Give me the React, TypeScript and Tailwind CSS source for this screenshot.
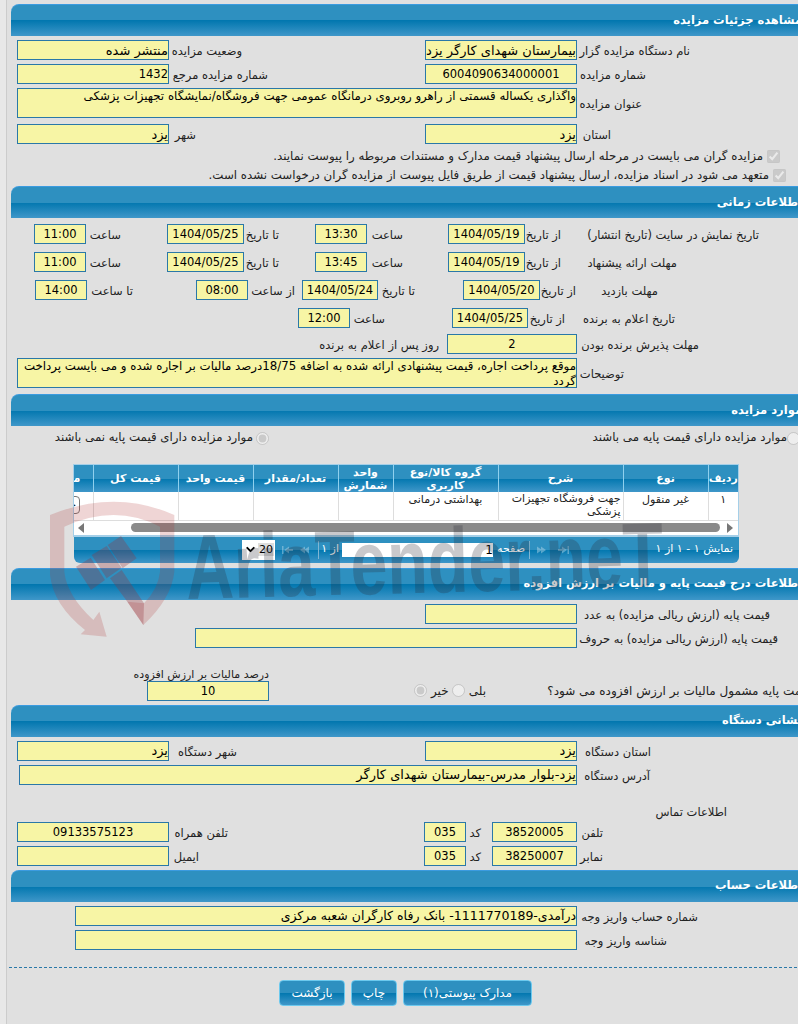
import { ReactNode } from "react"
import { ChevronDown } from "lucide-react"
import clsx from "clsx"

const barBg = "bg-[linear-gradient(to_bottom,#2e90c0_0%,#2e90c0_50%,#0277af_50%,#3f97c9_100%)]"

function Title({ children, className }: { children: ReactNode; className?: string }) {
  return (
    <div
      dir="rtl"
      className={clsx(
        "h-8 shrink-0 rounded-tl-lg border-t border-[#3b9be0] flex items-center text-[11.5px] font-bold text-white whitespace-nowrap",
        barBg,
        className
      )}
    >
      {children}
    </div>
  )
}

function F({
  value = "",
  className,
  center,
  size = "text-[11.5px]",
}: {
  value?: string
  className?: string
  center?: boolean
  size?: string
}) {
  return (
    <input
      readOnly
      dir="rtl"
      value={value}
      className={clsx(
        "h-5 shrink-0 border border-[#2a78a8] bg-[#f7f5a5] text-black outline-none",
        size,
        center ? "text-center" : "text-right",
        className
      )}
    />
  )
}

function Area({ value, className }: { value: string; className?: string }) {
  return (
    <textarea
      readOnly
      dir="rtl"
      value={value}
      className={clsx(
        "h-[30px] shrink-0 resize-none overflow-hidden border border-[#2a78a8] bg-[#f7f5a5] text-[11.8px] leading-[15px] text-black outline-none",
        className
      )}
    />
  )
}

function L({ children, className }: { children: ReactNode; className?: string }) {
  return (
    <span dir="rtl" className={clsx("h-5 shrink-0 whitespace-nowrap text-right text-[11.5px] leading-[22px]", className)}>
      {children}
    </span>
  )
}

function Row({ children, className }: { children: ReactNode; className?: string }) {
  return <div className={clsx("flex items-center", className)}>{children}</div>
}

function Btn({ children, className }: { children: ReactNode; className?: string }) {
  return (
    <button
      className={clsx(
        "h-[26px] rounded border border-[#6cc9ee] text-[12px] text-white",
        barBg,
        className
      )}
    >
      {children}
    </button>
  )
}

function Nav({ right, bar }: { right?: boolean; bar?: boolean }) {
  return (
    <svg width="11" height="8" viewBox="0 0 11 8" className={clsx("shrink-0 opacity-40", right && "rotate-180")}>
      {bar && <rect x="0" y="0" width="1.5" height="8" fill="#cfe6f2" />}
      <polygon points="2,4 7,0.5 7,7.5" fill="#cfe6f2" />
      {!bar && <polygon points="6,4 11,0.5 11,7.5" fill="#cfe6f2" />}
      {bar && <rect x="7" y="3" width="4" height="2" fill="#cfe6f2" />}
    </svg>
  )
}

const heads = [
  { t: "ردیف", w: "w-[30px]" },
  { t: "نوع", w: "w-[85px]" },
  { t: "شرح", w: "w-[125px]" },
  { t: "گروه کالا/نوع کاربری", w: "w-[105px]" },
  { t: "واحد شمارش", w: "w-[55px]" },
  { t: "تعداد/مقدار", w: "w-[85px]" },
  { t: "قیمت واحد", w: "w-[75px]" },
  { t: "قیمت کل", w: "w-[85px]" },
  { t: "مدارک", w: "w-[60px]" },
]

function ItemsTable() {
  return (
    <div className="ml-[62px] mt-[14px] w-[666px] border border-[#a5cfe8] border-b-2 bg-white">
      <div dir="rtl" className="overflow-hidden">
        <table className="w-[705px] table-fixed border-collapse text-[11px]">
          <thead>
            <tr className={barBg}>
              {heads.map((h) => (
                <th
                  key={h.t}
                  className={clsx(h.w, "h-[27px] border-l border-[#8fd0ee] p-0 text-center text-[11px] font-bold leading-[13px] text-white")}
                >
                  {h.t}
                </th>
              ))}
            </tr>
          </thead>
          <tbody>
            <tr className="h-[28px] align-top border-b border-[#ddd] text-[#222]">
              <td className="border-l border-[#ddd] text-center">۱</td>
              <td className="border-l border-[#ddd] text-center">غیر منقول</td>
              <td className="border-l border-[#ddd] pr-0.5 leading-[13px] text-right">جهت فروشگاه تجهیزات پزشکی</td>
              <td className="border-l border-[#ddd] text-center">بهداشتی درمانی</td>
              <td className="border-l border-[#ddd]"></td>
              <td className="border-l border-[#ddd]"></td>
              <td className="border-l border-[#ddd]"></td>
              <td className="border-l border-[#ddd]"></td>
              <td className="border-l border-[#ddd] pt-[4px]">
                <button className="mr-[13px] block h-[18px] w-[40px] rounded border border-[#777] bg-white text-[11px]">جزئیات</button>
              </td>
            </tr>
          </tbody>
        </table>
      </div>
      <div className="flex h-[14px] items-center">
        <svg width="6" height="10" viewBox="0 0 6 10" className="ml-[4px] shrink-0">
          <polygon points="0,5 6,0 6,10" fill="#777" />
        </svg>
        <div className="ml-[47px] h-[9px] w-[589px] rounded-full bg-[#8a8a8a]"></div>
        <svg width="6" height="10" viewBox="0 0 6 10" className="ml-[7px] shrink-0">
          <polygon points="6,5 0,0 0,10" fill="#777" />
        </svg>
      </div>
    </div>
  )
}

function Pager() {
  return (
    <div className={clsx("ml-[63px] flex h-[26px] w-[665px] items-center rounded-b-md text-[11px] text-white", barBg)}>
      <div className="ml-[168px] flex h-[20px] w-[33px] shrink-0 items-center bg-white text-black">
        <ChevronDown size={13} strokeWidth={3.5} className="ml-[2px] shrink-0" />
        <span className="ml-[1px] bg-[#ddd] px-[1px] text-[11px] leading-[13px]">20</span>
      </div>
      <div className="ml-[7px]"><Nav bar /></div>
      <div className="ml-[5px]"><Nav /></div>
      <div className="ml-[9px] h-[18px] w-px bg-[#7fb6d4]"></div>
      <span dir="rtl" className="ml-[3px] w-[17px] whitespace-nowrap">از ۱</span>
      <input readOnly value="1" dir="rtl" className="ml-[3px] h-[14px] w-[151px] bg-white text-right text-[12px] text-black" />
      <span dir="rtl" className="ml-[4px] w-[28px] whitespace-nowrap">صفحه</span>
      <div className="ml-[4px] h-[18px] w-px bg-[#7fb6d4]"></div>
      <div className="ml-[7px]"><Nav right /></div>
      <div className="ml-[10px]"><Nav right bar /></div>
      <span dir="rtl" className="ml-auto mr-[6px] whitespace-nowrap">نمایش ۱ - ۱ از ۱</span>
    </div>
  )
}

// watermark that lies over the whole page
function Watermark() {
  return (
    <div className="pointer-events-none absolute inset-0 overflow-hidden">
      <svg width="150" height="150" viewBox="0 0 450 450" className="absolute left-[40px] top-[495px]">
        <path
          fill="rgba(175,45,45,0.2)"
          fillRule="evenodd"
          d="M30 60 Q225 -20 403 60 L403 230 Q395 310 310 390 L262 320 L312 325 Q355 280 360 230 L360 95 Q225 25 73 95 L73 230 Q80 300 160 375 L178 350 L200 425 L122 418 L135 405 Q40 330 30 240 Z"
        />
        <path
          fill="rgba(150,50,60,0.3)"
          d="M108 215 L152 188 L195 255 L153 285 Z M155 180 L200 153 L245 218 L200 250 Z M203 150 L243 123 L290 190 L248 220 Z M210 250 L245 225 L312 325 L310 390 L262 320 Z"
        />
      </svg>
      <div className="absolute left-[186px] top-[512px] origin-left -rotate-[1.5deg] scale-x-[0.72] whitespace-nowrap [font-family:'Liberation_Sans',sans-serif] text-[92px] font-bold leading-[110px] text-[rgba(40,40,50,0.25)]">
        AriaTender.neT
      </div>
    </div>
  )
}

export default function App() {
  return (
    <div className="relative flex h-[1024px] w-[798px] overflow-hidden bg-[#e0e0e0] [font-family:'DejaVu_Sans',sans-serif] text-[12px] text-[#222]">
      <div className="w-[7px] shrink-0 border-r border-[#ccc] bg-[#e8e8e8]"></div>
      <div className="ml-[4px] flex w-[791px] shrink-0 flex-col pt-[4px]">
        <Title>مشاهده جزئیات مزایده</Title>
        <div className="flex flex-col gap-1 pt-1">
          <Row>
            <F className="ml-[6px] w-[152px]" size="text-[13px]" value="منتشر شده" />
            <L className="w-[73px]">وضعیت مزایده</L>
            <F className="ml-[183px] w-[152px]" size="text-[13px]" value="بیمارستان شهدای کارگر یزد" />
            <L className="w-[113px]">نام دستگاه مزایده گزار</L>
          </Row>
          <Row>
            <F className="ml-[6px] w-[152px]" value="1432" />
            <L className="w-[99px]">شماره مزایده مرجع</L>
            <F className="ml-[157px] w-[152px]" center value="6004090634000001" />
            <L className="w-[69px]">شماره مزایده</L>
          </Row>
          <Row>
            <Area className="ml-[6px] w-[560px]" value="واگذاری یکساله قسمتی از راهرو روبروی درمانگاه عمومی جهت فروشگاه/نمایشگاه تجهیزات پزشکی" />
            <L className="w-[65px]">عنوان مزایده</L>
          </Row>
          <Row className="mt-0.5">
            <F className="ml-[6px] w-[152px]" size="text-[13px]" value="یزد" />
            <L className="w-[27px]">شهر</L>
            <F className="ml-[229px] w-[152px]" size="text-[13px]" value="یزد" />
            <L className="w-[34px]">استان</L>
          </Row>
        </div>
        <div dir="rtl" className="mt-[3px] flex h-[19px] items-center gap-1 pr-[22px] text-[11.8px]">
          <input type="checkbox" checked disabled readOnly />
          <span>مزایده گران می بایست در مرحله ارسال پیشنهاد قیمت مدارک و مستندات مربوطه را پیوست نمایند.</span>
        </div>
        <div dir="rtl" className="flex h-[19px] items-center gap-1 pr-[16px] text-[11.8px]">
          <input type="checkbox" checked disabled readOnly />
          <span>متعهد می شود در اسناد مزایده، ارسال پیشنهاد قیمت از طریق فایل پیوست از مزایده گران درخواست نشده است.</span>
        </div>

        <Title className="mt-[1px]">اطلاعات زمانی</Title>
        <div className="flex flex-col pt-[6px]">
          <Row>
            <F className="ml-[23px] w-[52px]" center value="11:00" />
            <L className="w-[35px]">ساعت</L>
            <F className="ml-[46px] w-[77px]" center value="1404/05/25" />
            <L className="w-[35px]">تا تاریخ</L>
            <F className="ml-[36px] w-[52px]" center value="13:30" />
            <L className="w-[36px]">ساعت</L>
            <F className="ml-[45px] w-[77px]" center value="1404/05/19" />
            <L className="w-[36px]">از تاریخ</L>
            <L className="w-[198px]">تاریخ نمایش در سایت (تاریخ انتشار)</L>
          </Row>
          <Row className="mt-[8px]">
            <F className="ml-[23px] w-[52px]" center value="11:00" />
            <L className="w-[35px]">ساعت</L>
            <F className="ml-[46px] w-[77px]" center value="1404/05/25" />
            <L className="w-[35px]">تا تاریخ</L>
            <F className="ml-[36px] w-[52px]" center value="13:45" />
            <L className="w-[36px]">ساعت</L>
            <F className="ml-[45px] w-[77px]" center value="1404/05/19" />
            <L className="w-[36px]">از تاریخ</L>
            <L className="w-[116px]">مهلت ارائه پیشنهاد</L>
          </Row>
          <Row className="mt-[8px]">
            <F className="ml-[24px] w-[52px]" center value="14:00" />
            <L className="w-[46px]">تا ساعت</L>
            <F className="ml-[63px] w-[52px]" center value="08:00" />
            <L className="w-[47px]">از ساعت</L>
            <F className="ml-[7px] w-[76px]" center value="1404/05/24" />
            <L className="w-[37px]">تا تاریخ</L>
            <F className="ml-[48px] w-[77px]" center value="1404/05/20" />
            <L className="w-[36px]">از تاریخ</L>
            <L className="w-[82px]">مهلت بازدید</L>
          </Row>
          <Row className="mt-[8px]">
            <F className="ml-[287px] w-[52px]" center value="12:00" />
            <L className="w-[35px]">ساعت</L>
            <F className="ml-[67px] w-[76px]" center value="1404/05/25" />
            <L className="w-[37px]">از تاریخ</L>
            <L className="w-[110px]">تاریخ اعلام به برنده</L>
          </Row>
          <Row className="mt-[6px]">
            <L className="ml-[309px] w-[119px]">روز پس از اعلام به برنده</L>
            <F className="ml-[8px] w-[130px]" center value="2" />
            <L className="w-[122px]">مهلت پذیرش برنده بودن</L>
          </Row>
          <Row className="mt-[4px]">
            <Area
              className="ml-[6px] w-[560px]"
              value="موقع پرداخت اجاره، قیمت پیشنهادی ارائه شده به اضافه 18/75درصد مالیات بر اجاره شده و می بایست پرداخت گردد"
            />
            <L className="w-[47px]">توضیحات</L>
          </Row>
        </div>

        <Title className="mt-[6px]">موارد مزایده</Title>
        <div dir="rtl" className="flex h-[24px] items-center text-[11.8px]">
          <input type="radio" disabled className="mr-[2px]" />
          <span className="w-[518px]">موارد مزایده دارای قیمت پایه می باشند</span>
          <input type="radio" checked disabled readOnly />
          <span className="mr-[3px]">موارد مزایده دارای قیمت پایه نمی باشند</span>
        </div>
        <ItemsTable />
        <Pager />

        <Title className="mt-[5px]">اطلاعات درج قیمت پایه و مالیات بر ارزش افزوده</Title>
        <div className="flex flex-col gap-1 pt-1">
          <Row>
            <F className="ml-[414px] w-[152px]" />
            <L className="w-[193px]">قیمت پایه (ارزش ریالی مزایده) به عدد</L>
          </Row>
          <Row>
            <F className="ml-[184px] w-[382px]" />
            <L className="w-[201px]">قیمت پایه (ارزش ریالی مزایده) به حروف</L>
          </Row>
        </div>
        <Row className="mt-[20px] items-end">
          <div className="ml-[136px] flex w-[122px] shrink-0 flex-col">
            <span dir="rtl" className="h-[13px] whitespace-nowrap text-right text-[11px] leading-[13px]">درصد مالیات بر ارزش افزوده</span>
            <F center className="w-full" value="10" />
          </div>
          <div dir="rtl" className="flex h-[20px] w-[533px] shrink-0 items-center">
            <span className="mr-[-9px] w-[260px] shrink-0 whitespace-nowrap">قیمت پایه مشمول مالیات بر ارزش افزوده می شود؟</span>
            <span className="mr-[65px]">بلی</span>
            <input type="radio" disabled className="mr-[4px]" />
            <span className="mr-[3px]">خیر</span>
            <input type="radio" checked disabled readOnly className="mr-[4px]" />
          </div>
        </Row>

        <Title className="mt-[4px]">نشانی دستگاه</Title>
        <div className="flex flex-col gap-1 pt-1">
          <Row>
            <F className="ml-[6px] w-[152px]" size="text-[13px]" value="یزد" />
            <L className="w-[68px]">شهر دستگاه</L>
            <F className="ml-[188px] w-[152px]" size="text-[13px]" value="یزد" />
            <L className="w-[74px]">استان دستگاه</L>
          </Row>
          <Row>
            <F className="ml-[8px] w-[558px]" size="text-[13px]" value="یزد-بلوار مدرس-بیمارستان شهدای کارگر" />
            <L className="w-[73px]">آدرس دستگاه</L>
          </Row>
        </div>
        <div dir="rtl" className="mt-[20px] h-[14px] pr-[75px] text-[11.5px] leading-[14px]">اطلاعات تماس</div>
        <div className="flex flex-col gap-1 pt-[3px]">
          <Row>
            <F className="ml-[6px] w-[152px]" center value="09133575123" />
            <L className="w-[59px]">تلفن همراه</L>
            <F className="ml-[196px] w-[42px]" center value="035" />
            <L className="w-[15px]">کد</L>
            <F className="ml-[11px] w-[85px]" center value="38520005" />
            <L className="w-[26px]">تلفن</L>
          </Row>
          <Row>
            <F className="ml-[6px] w-[152px]" />
            <L className="w-[30px]">ایمیل</L>
            <F className="ml-[225px] w-[42px]" center value="035" />
            <L className="w-[15px]">کد</L>
            <F className="ml-[11px] w-[85px]" center value="38250007" />
            <L className="w-[26px]">نمابر</L>
          </Row>
        </div>

        <Title className="mt-[4px]">اطلاعات حساب</Title>
        <div className="flex flex-col gap-1 pt-1">
          <Row>
            <F className="ml-[64px] w-[502px]" size="text-[12.5px]" value="درآمدی-1111770189- بانک رفاه کارگران شعبه مرکزی" />
            <L className="w-[121px]">شماره حساب واریز وجه</L>
          </Row>
          <Row>
            <F className="ml-[64px] w-[502px]" />
            <L className="w-[90px]">شناسه واریز وجه</L>
          </Row>
        </div>
        <div className="-ml-[2px] mt-[17px] border-t border-dashed border-[#2a78a8]"></div>
        <div className="mt-[12px] flex gap-[6px] pl-[268px]">
          <Btn className="w-[66px]">بازگشت</Btn>
          <Btn className="w-[46px]">چاپ</Btn>
          <Btn className="w-[129px]">مدارک پیوستی(۱)</Btn>
        </div>
      </div>
      <Watermark />
    </div>
  )
}
